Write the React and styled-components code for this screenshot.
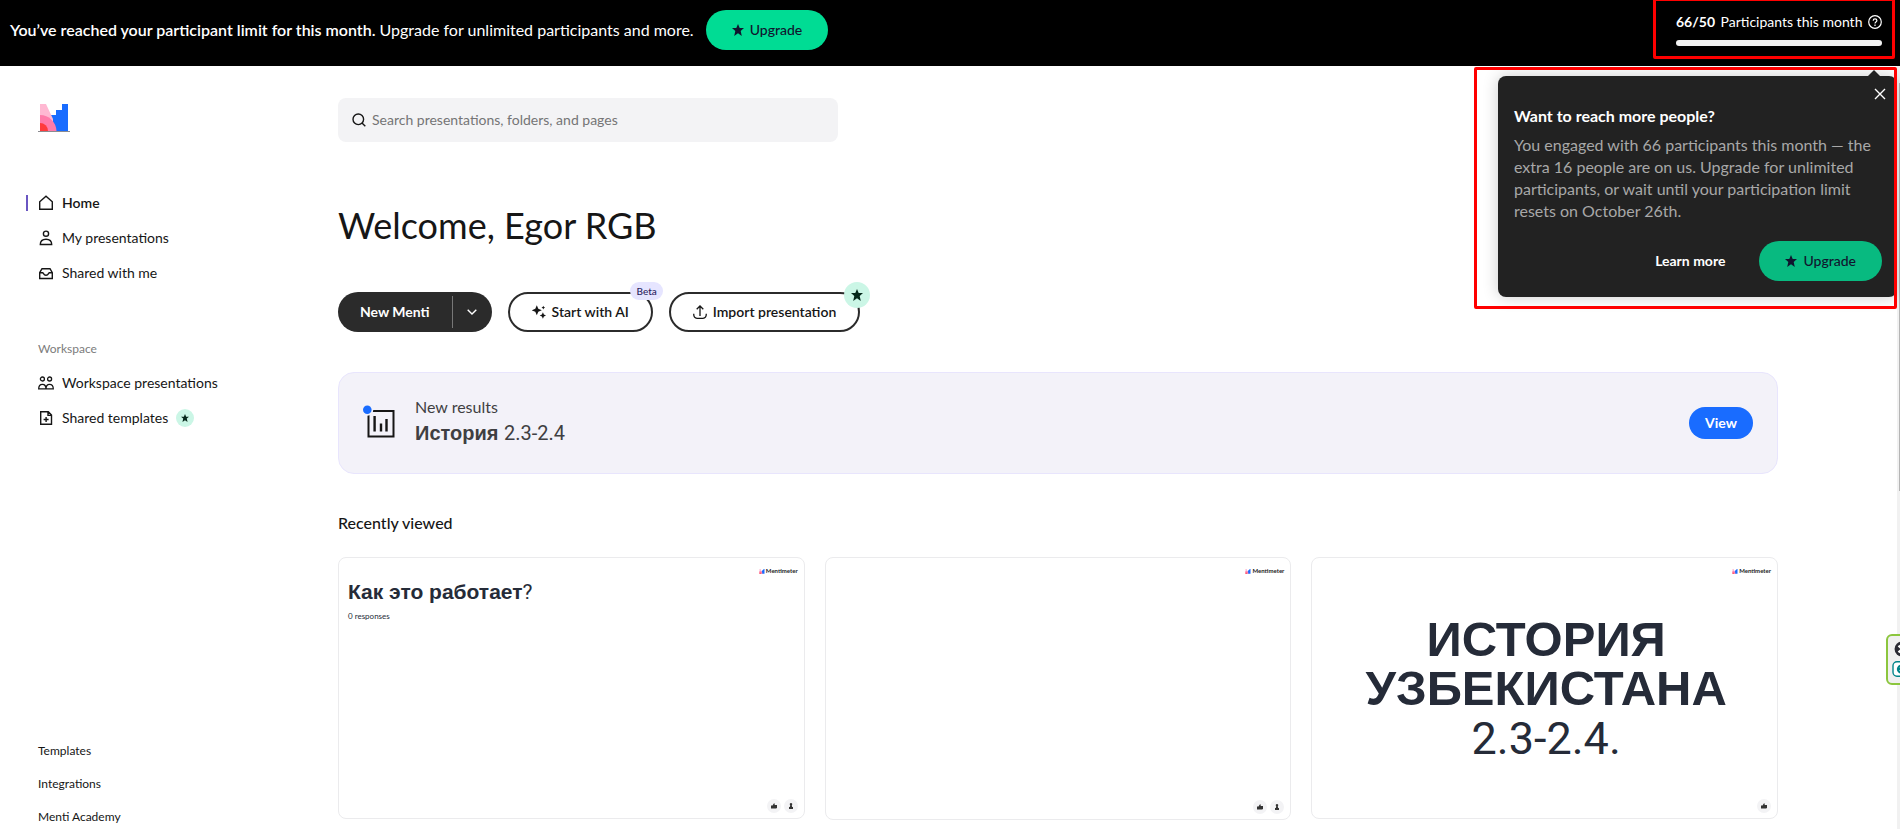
import React from 'react';
import styled, { createGlobalStyle } from 'styled-components';

const GlobalStyle = createGlobalStyle`
  *, *::before, *::after { box-sizing: border-box; }
  html, body { margin: 0; }
  body {
    background: #fff;
    color: #161616;
    font-family: Lato, "Open Sans", sans-serif;
    font-size: 14px;
    line-height: 20px;
  }
  button, input { font: inherit; color: inherit; margin: 0; }
  button { border: 0; padding: 0; background: none; cursor: pointer; }
  a { color: inherit; text-decoration: none; }
  h1, h2, h3, p, ul { margin: 0; padding: 0; }
  ul { list-style: none; }
  svg { display: block; flex: none; }
`;

const cyrillic = '"Liberation Sans", Arial, sans-serif';
const digits = 'Roboto, "Liberation Sans", sans-serif';

/* ---------- shell ---------- */

const Shell = styled.div`
  position: relative;
  display: flex;
  flex-direction: column;
  height: 100vh;
  overflow: hidden;
`;

const TopBar = styled.header`
  display: flex;
  align-items: flex-start;
  justify-content: space-between;
  flex: none;
  height: 66px;
  padding: 0 18px 0 10px;
  background: #000;
  color: #fff;
`;

const LimitNotice = styled.div`
  display: flex;
  align-items: center;
  gap: 12px;
  padding-top: 10px;
  font-size: 16px;
`;

const Strong = styled.strong`
  font-weight: 600;
`;

const Body = styled.div`
  display: flex;
  flex: 1;
  min-height: 0;
`;

const Scrollbar = styled.div`
  flex: none;
  width: 3px;
  padding: 17px 0 0 2px;
  background: #f1f1f1;
`;

const ScrollThumb = styled.div`
  height: 408px;
  background: #b5b5b5;
`;

/* ---------- buttons ---------- */

const PillButton = styled.button`
  position: relative;
  display: inline-flex;
  align-items: center;
  justify-content: center;
  gap: 6px;
  height: ${(p) => (p.$small ? 32 : 40)}px;
  padding: 0 ${(p) => p.$pad || 26}px;
  border-radius: 20px;
  font-size: 14px;
  font-weight: ${(p) => p.$weight || 500};
  white-space: nowrap;
  ${(p) => p.$tone === 'mint' && 'background: #00dc94; color: #10152e;'}
  ${(p) => p.$tone === 'green' && 'background: #08ba80; color: #10152e;'}
  ${(p) => p.$tone === 'blue' && 'background: #196cff; color: #fff;'}
  ${(p) => p.$tone === 'text' && 'color: #fff;'}
  ${(p) => p.$tone === 'outline' && 'background: #fff; border: 2px solid #2b2b2b; color: #161616;'}
`;

const SplitButton = styled.div`
  display: flex;
  align-items: center;
  height: 40px;
  border-radius: 20px;
  background: #2b2b2b;
  color: #fff;
`;

const SplitMain = styled.button`
  height: 40px;
  padding: 0 22px;
  font-weight: 700;
`;

const SplitToggle = styled.button`
  display: flex;
  align-items: center;
  justify-content: center;
  width: 40px;
  height: 32px;
  border-left: 1px solid #777;
`;

/* ---------- participant meter ---------- */

const Meter = styled.div`
  position: relative;
  display: flex;
  flex-direction: column;
  gap: 8px;
  width: 206px;
  padding-top: 12px;
`;

const MeterLabel = styled.div`
  display: flex;
  align-items: center;
  justify-content: space-between;
  white-space: nowrap;
`;

const MeterTrack = styled.div`
  height: 6px;
  border-radius: 3px;
  background: #f2f2f2;
`;

const Highlight = styled.div`
  position: absolute;
  inset: ${(p) => p.$inset};
  border: 3px solid #ff0000;
  border-radius: 2px;
  pointer-events: none;
`;

/* ---------- popover ---------- */

const Popover = styled.section`
  position: absolute;
  z-index: 2;
  top: 76px;
  right: 3px;
  width: 399px;
  padding: 12px 15px 16px 16px;
  border-radius: 8px;
  background: #222;
  color: #fff;
  font-size: 16px;
  line-height: 22px;
  box-shadow: 0 0 16px rgba(0, 0, 0, 0.2);

  &::before {
    content: '';
    position: absolute;
    top: -6px;
    right: 16px;
    border: 7px solid transparent;
    border-top: 0;
    border-bottom-color: #222;
  }
`;

const CloseButton = styled.button`
  display: block;
  margin: 0 -4px 5px auto;
`;

const PopoverTitle = styled.h3`
  font-size: 16px;
  font-weight: 700;
`;

const PopoverText = styled.p`
  margin-top: 7px;
  color: #a8a8a8;
`;

const PopoverActions = styled.div`
  display: flex;
  justify-content: flex-end;
  gap: 8px;
  margin-top: 19px;
`;

/* ---------- sidebar ---------- */

const Sidebar = styled.nav`
  display: flex;
  flex-direction: column;
  flex: none;
  width: 338px;
  padding: 38px 26px 0 38px;
`;

const LogoLink = styled.a`
  width: 32px;
  margin-bottom: 53px;
`;

const NavLink = styled.a`
  display: flex;
  align-items: center;
  gap: 8px;
  height: 35px;
  margin-left: -12px;
  padding-left: 12px;
  font-weight: ${(p) => (p.$active ? 600 : 400)};
  background: ${(p) =>
    p.$active ? 'linear-gradient(#6a56c2, #6a56c2) 0 50% / 2px 16px no-repeat' : 'none'};
`;

const NavIcon = styled.span`
  display: flex;
  width: 16px;
  height: 16px;
`;

const NavHeading = styled.h2`
  margin: 49px 0 6px;
  color: #7c7c7c;
  font-size: 12px;
  font-weight: 400;
`;

const FooterLinks = styled.ul`
  display: flex;
  flex-direction: column;
  gap: 13px;
  margin-top: auto;
  padding-bottom: 2px;
  font-size: 12px;
`;

const PlanBadge = styled.span`
  display: inline-flex;
  align-items: center;
  justify-content: center;
  width: ${(p) => p.$size}px;
  height: ${(p) => p.$size}px;
  border-radius: 50%;
  background: #cbf6e6;
  color: #06281b;
`;

/* ---------- main ---------- */

const Main = styled.main`
  flex: 1;
  min-width: 0;
  padding: 32px 119px 0 0;
  overflow: hidden;
`;

const SearchBox = styled.label`
  display: flex;
  align-items: center;
  gap: 6px;
  max-width: 500px;
  height: 44px;
  padding: 0 14px;
  border-radius: 8px;
  background: #f3f3f5;
`;

const SearchInput = styled.input`
  flex: 1;
  min-width: 0;
  padding: 0;
  border: 0;
  outline: 0;
  background: none;
  &::placeholder { color: #757575; opacity: 1; }
`;

const Welcome = styled.h1`
  margin: 60px 0 44px;
  font-size: 36px;
  line-height: 46px;
  font-weight: 400;
`;

const Actions = styled.div`
  display: flex;
  gap: 16px;
`;

const BetaTag = styled.span`
  position: absolute;
  top: -12px;
  right: -12px;
  padding: 0 6px;
  border-radius: 9px;
  background: #e6e5ff;
  color: #2c1f5e;
  font-size: 10px;
  line-height: 18px;
  font-weight: 500;
`;

const CornerBadge = styled(PlanBadge)`
  position: absolute;
  top: -12px;
  right: -12px;
`;

const ResultsCard = styled.section`
  display: flex;
  align-items: center;
  gap: 20px;
  height: 102px;
  margin-top: 40px;
  padding: 0 24px;
  border: 1px solid #e8e5fd;
  border-radius: 16px;
  background: #f3f2f9;
`;

const ResultsText = styled.div`
  flex: 1;
  padding-bottom: 6px;
  color: #3f3f42;
  font-size: 16px;
  line-height: 26px;
`;

const ResultsTitle = styled.h2`
  font: 700 20px/26px ${cyrillic};
`;

const Digits = styled.span`
  font-family: ${digits};
  font-weight: ${(p) => p.$weight || 400};
`;

const SectionTitle = styled.h2`
  margin: 39px 0 24px;
  font-size: 16px;
  font-weight: 500;
`;

const CardGrid = styled.div`
  display: grid;
  grid-template-columns: repeat(3, 1fr);
  gap: 20px;
`;

const SlideCard = styled.a`
  display: flex;
  flex-direction: column;
  aspect-ratio: 16 / 9;
  padding: 8px 6px 5px 9px;
  border: 1px solid #ebebed;
  border-radius: 8px;
  background: #fff;
  color: #252b38;
`;

const SlideBrand = styled.div`
  display: flex;
  align-items: center;
  justify-content: flex-end;
  gap: 1px;
  height: 10px;
  color: #222;
  font-size: 6px;
  line-height: 10px;
  font-weight: 700;
`;

const SlideBody = styled.div`
  display: flex;
  flex: 1;
  flex-direction: column;
  padding-top: 3px;
`;

const SlideHeading = styled.h3`
  font: 700 21px/26px ${cyrillic};
`;

const Responses = styled.p`
  margin-top: 5px;
  font-size: 8px;
  line-height: 12px;
`;

const SlideTitle = styled.h3`
  display: flex;
  flex-direction: column;
  margin: auto 0;
  text-align: center;
  font: 700 49px/49px ${cyrillic};
`;

const SlideNumber = styled(Digits)`
  padding-top: 1px;
  font-size: 45px;
  line-height: 49px;
`;

const SlideFooter = styled.div`
  display: flex;
  justify-content: flex-end;
  gap: 3px;
`;

const Reaction = styled.span`
  display: flex;
  align-items: center;
  justify-content: center;
  width: 14px;
  height: 14px;
  border-radius: 50%;
  background: #f3f3f5;
`;

const SideWidget = styled.aside`
  position: absolute;
  top: 634px;
  right: -18px;
  display: flex;
  flex-direction: column;
  align-items: center;
  gap: 4px;
  width: 32px;
  height: 51px;
  padding-top: 5px;
  border: 2px solid #8cc63e;
  border-radius: 6px;
  background: #f0f0f0;
`;

/* ---------- icons ---------- */

const line = { fill: 'none', stroke: 'currentColor', strokeWidth: 1.4 };

const Star = ({ size = 12 }) => (
  <svg width={size} height={size} viewBox="0 0 12 12" fill="currentColor">
    <path d="M6 0 7.7 4H12L8.7 6.9 9.8 12 6 9.2 2.2 12 3.3 6.9 0 4h4.3z" />
  </svg>
);

const HomeIcon = () => (
  <svg width="16" height="16" viewBox="0 0 16 16" {...line}>
    <path d="M1.7 14.3V6.7L8 1.2l6.3 5.5v7.6z" />
  </svg>
);

const PersonIcon = () => (
  <svg width="16" height="16" viewBox="0 0 16 16" {...line}>
    <circle cx="8" cy="3.7" r="2.6" />
    <path d="M2.3 14.5c0-3.4 2.3-5.3 5.7-5.3s5.7 1.9 5.7 5.3z" />
  </svg>
);

const InboxIcon = () => (
  <svg width="16" height="16" viewBox="0 0 16 16" {...line}>
    <path d="M1.7 7.7 4 3.7h8l2.3 4v5.8H1.7zM1.7 7.7h3.1c.5 0 .9 2.6 3.2 2.6s2.7-2.6 3.2-2.6h3.1" />
  </svg>
);

const PeopleIcon = () => (
  <svg width="16" height="16" viewBox="0 0 16 16" {...line} strokeWidth="1.3">
    <circle cx="4.4" cy="4" r="2" />
    <circle cx="11.6" cy="4" r="2" />
    <path d="M.7 13.9c0-3 1.5-4.6 3.7-4.6S8 10.9 8 13.9zM8 13.9c0-3 1.4-4.6 3.6-4.6s3.7 1.6 3.7 4.6z" />
  </svg>
);

const TemplateIcon = () => (
  <svg width="16" height="16" viewBox="0 0 16 16" {...line}>
    <path d="M2.7 1.7h7.6l3.2 3.4v9.2H2.7zM10 1.7v3.7h3.5M8.1 7v5M5.6 9.5h5" />
  </svg>
);

const SearchIcon = () => (
  <svg width="14" height="14" viewBox="0 0 14 14" {...line}>
    <circle cx="6.3" cy="6.3" r="5.3" />
    <path d="m10 10 3.3 3.3" />
  </svg>
);

const HelpIcon = () => (
  <svg width="14" height="14" viewBox="0 0 14 14" {...line} strokeWidth="1.2">
    <circle cx="7" cy="7" r="6.3" />
    <path d="M5.2 5.7c0-2.5 3.7-2.4 3.7-.1 0 1.5-1.9 1.4-1.9 2.8M7 9.6v1.3" />
  </svg>
);

const ChevronIcon = () => (
  <svg width="10" height="6" viewBox="0 0 10 6" {...line}>
    <path d="m.7.7 4.3 4.2L9.3.7" />
  </svg>
);

const CloseIcon = () => (
  <svg width="12" height="12" viewBox="0 0 12 12" {...line}>
    <path d="m1 1 10 10M11 1 1 11" />
  </svg>
);

const SparkleIcon = () => (
  <svg width="14" height="14" viewBox="0 0 14 14" fill="currentColor">
    <path d="M4.8.3 6.3 3.8 9.8 5.3 6.3 6.8 4.8 10.3 3.3 6.8-.2 5.3l3.5-1.5zM10.9 7.3l1 2.2 2.2 1-2.2 1-1 2.3-1-2.3-2.2-1 2.2-1zM11.3.8l.6 1.2 1.2.6-1.2.6-.6 1.2-.6-1.2-1.2-.6 1.2-.6z" />
  </svg>
);

const UploadIcon = () => (
  <svg width="14" height="14" viewBox="0 0 14 14" {...line} strokeWidth="1.3">
    <path d="M7 11V1.2M3.7 4.3 7 1l3.3 3.3M.7 8.8c0 3 1 4.5 3.3 4.5h6c2.3 0 3.3-1.5 3.3-4.5" />
  </svg>
);

const BrandMark = ({ width, height, base }) => (
  <svg width={width} height={height} viewBox="0 0 32 28">
    <path fill="#196cff" d="M13 11h5V6h6V0h6v27H13z" />
    <path fill="#ffb8d2" d="M2 0h6l7 15v12H2z" />
    <path fill="#ff7ba9" d="M2 11a16.5 16.5 0 0 1 16.5 16H2z" />
    <path fill="#ff3b3b" d="M2 19a8 8 0 0 1 8 8H2z" />
    {base && <path fill="#8b8b90" d="M0 27h32v1H0z" />}
  </svg>
);

const ResultsIcon = () => (
  <svg width="32" height="36" viewBox="0 0 32 36">
    <path d="M5.5 6h25v25.5h-25z" fill="none" stroke="#161616" strokeWidth="2" />
    <path d="M11.6 11v15.5M18 18.5v8M23.5 14v12.5" fill="none" stroke="#161616" strokeWidth="2.4" />
    <circle cx="4.3" cy="4.8" r="6" fill="#f3f2f9" />
    <circle cx="4.3" cy="4.8" r="4.3" fill="#196cff" />
  </svg>
);

const ThumbIcon = () => (
  <svg width="6" height="6" viewBox="0 0 6 6" fill="#333">
    <path d="M0 2.5h1.5L3 .3l.8.4L3.6 2H6v3L5 5.5H0z" />
  </svg>
);

const PawnIcon = () => (
  <svg width="6" height="6" viewBox="0 0 6 6" fill="#333">
    <path d="M3 0a1.300 1.300 0 0 1 .8 2.300L4.200 4H5v2H1V4h.8l.4-1.700A1.300 1.300 0 0 1 3 0z" />
  </svg>
);

const WidgetCloseIcon = () => (
  <svg width="16" height="16" viewBox="0 0 14 14">
    <circle cx="7" cy="7" r="6.5" fill="#2b2b33" />
    <path d="m4 4 6 6M10 4l-6 6" stroke="#fff" strokeWidth="2" />
  </svg>
);

const WidgetLogo = () => (
  <svg width="20" height="16" viewBox="0 0 20 16" fill="none" stroke="#008489">
    <rect x="1" y=".7" width="18" height="14.6" rx="4" fill="#fff" strokeWidth="1.4" />
    <path d="M6 8h7a3.5 3.5 0 1 0-1 2.6" strokeWidth="2.2" />
  </svg>
);

/* ---------- data ---------- */

const mainLinks = [
  { label: 'Home', Icon: HomeIcon, active: true },
  { label: 'My presentations', Icon: PersonIcon },
  { label: 'Shared with me', Icon: InboxIcon },
];

const workspaceLinks = [
  { label: 'Workspace presentations', Icon: PeopleIcon },
  { label: 'Shared templates', Icon: TemplateIcon, badge: true },
];

const footerLinks = ['Templates', 'Integrations', 'Menti Academy'];

const NavItem = ({ label, Icon, active, badge }) => (
  <li>
    <NavLink href="#" $active={active}>
      <NavIcon><Icon /></NavIcon>
      {label}
      {badge && <PlanBadge $size={18}><Star size={8} /></PlanBadge>}
    </NavLink>
  </li>
);

const Slide = ({ children, withPawn, label }) => (
  <SlideCard href="#" aria-label={label}>
    <SlideBrand><BrandMark width={6} height={5} />Mentimeter</SlideBrand>
    <SlideBody>{children}</SlideBody>
    <SlideFooter>
      <Reaction><ThumbIcon /></Reaction>
      {withPawn && <Reaction><PawnIcon /></Reaction>}
    </SlideFooter>
  </SlideCard>
);

export default function App() {
  return (
    <Shell>
      <GlobalStyle />
      <TopBar>
        <LimitNotice>
          <p>
            <Strong>You’ve reached your participant limit for this month.</Strong> Upgrade for
            unlimited participants and more.
          </p>
          <PillButton $tone="mint"><Star />Upgrade</PillButton>
        </LimitNotice>
        <Meter>
          <MeterLabel>
            <b>66/50</b>
            <span>Participants this month</span>
            <HelpIcon />
          </MeterLabel>
          <MeterTrack />
          <Highlight $inset="-2px -13px -13px -23px" />
        </Meter>
      </TopBar>

      <Body>
        <Sidebar>
          <LogoLink href="#" aria-label="Mentimeter">
            <BrandMark width={32} height={28} base />
          </LogoLink>
          <ul>{mainLinks.map((l) => <NavItem key={l.label} {...l} />)}</ul>
          <NavHeading>Workspace</NavHeading>
          <ul>{workspaceLinks.map((l) => <NavItem key={l.label} {...l} />)}</ul>
          <FooterLinks>
            {footerLinks.map((l) => <li key={l}><a href="#">{l}</a></li>)}
          </FooterLinks>
        </Sidebar>

        <Main>
          <SearchBox>
            <SearchIcon />
            <SearchInput
              type="text"
              aria-label="Search"
              placeholder="Search presentations, folders, and pages"
            />
          </SearchBox>
          <Welcome>Welcome, Egor RGB</Welcome>
          <Actions>
            <SplitButton>
              <SplitMain>New Menti</SplitMain>
              <SplitToggle aria-label="More options"><ChevronIcon /></SplitToggle>
            </SplitButton>
            <PillButton $tone="outline" $weight={600} $pad={22}>
              <SparkleIcon />Start with AI<BetaTag>Beta</BetaTag>
            </PillButton>
            <PillButton $tone="outline" $weight={600} $pad={22}>
              <UploadIcon />Import presentation
              <CornerBadge $size={26}><Star /></CornerBadge>
            </PillButton>
          </Actions>
          <ResultsCard>
            <ResultsIcon />
            <ResultsText>
              <p>New results</p>
              <ResultsTitle>История <Digits>2.3-2.4</Digits></ResultsTitle>
            </ResultsText>
            <PillButton $tone="blue" $small $pad={16} $weight={700}>View</PillButton>
          </ResultsCard>
          <SectionTitle>Recently viewed</SectionTitle>
          <CardGrid>
            <Slide withPawn>
              <SlideHeading>Как это работает<Digits>?</Digits></SlideHeading>
              <Responses>0 responses</Responses>
            </Slide>
            <Slide withPawn label="Untitled presentation" />
            <Slide>
              <SlideTitle>
                <span>ИСТОРИЯ</span>
                <span>УЗБЕКИСТАНА</span>
                <SlideNumber>2.3-2.4.</SlideNumber>
              </SlideTitle>
            </Slide>
          </CardGrid>
        </Main>
        <Scrollbar><ScrollThumb /></Scrollbar>
      </Body>

      <Popover>
        <CloseButton aria-label="Close"><CloseIcon /></CloseButton>
        <PopoverTitle>Want to reach more people?</PopoverTitle>
        <PopoverText>
          You engaged with 66 participants this month — the extra 16 people are on us. Upgrade for
          unlimited participants, or wait until your participation limit resets on October 26th.
        </PopoverText>
        <PopoverActions>
          <PillButton $tone="text" $weight={700}>Learn more</PillButton>
          <PillButton $tone="green"><Star />Upgrade</PillButton>
        </PopoverActions>
        <Highlight $inset="-9px 0 -12px -24px" />
      </Popover>

      <SideWidget><WidgetCloseIcon /><WidgetLogo /></SideWidget>
    </Shell>
  );
}
